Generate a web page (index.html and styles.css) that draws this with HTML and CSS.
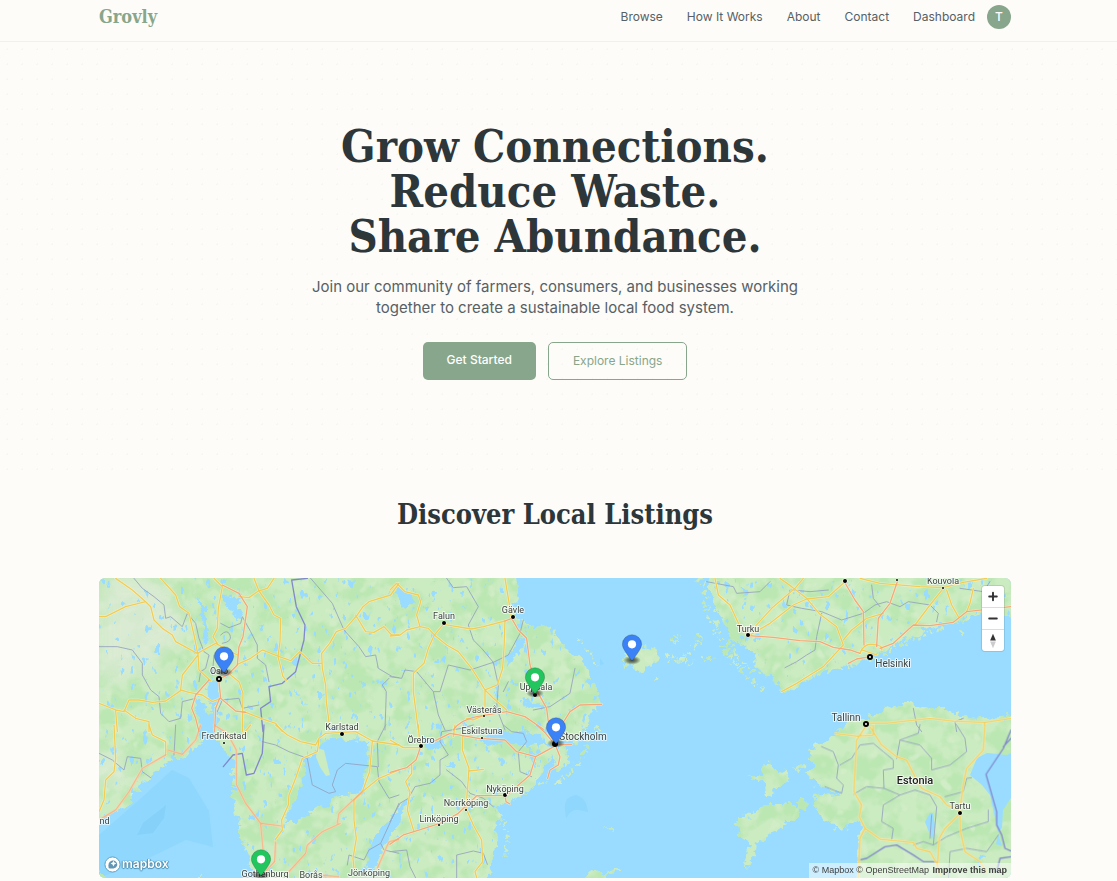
FILE: index.html
```html
<!DOCTYPE html>
<html lang="en">
<head>
<meta charset="utf-8">
<meta name="viewport" content="width=device-width, initial-scale=1">
<title>Grovly</title>
<link rel="stylesheet" href="styles.css">
</head>
<body>
<header class="site-header">
  <div class="container header-row">
    <a class="brand" href="#">Grovly</a>
    <nav class="nav">
      <a href="#">Browse</a>
      <a href="#">How It Works</a>
      <a href="#">About</a>
      <a href="#">Contact</a>
      <a href="#">Dashboard</a>
    </nav>
    <button class="avatar" type="button" aria-label="Account">T</button>
  </div>
</header>
<main>
  <section class="hero">
    <div class="container hero-inner">
      <h1>Grow Connections.<br>Reduce Waste.<br>Share Abundance.</h1>
      <p>Join our community of farmers, consumers, and businesses working together to create a sustainable local food system.</p>
      <div class="actions">
        <a class="btn btn-primary" href="#">Get Started</a>
        <a class="btn btn-outline" href="#">Explore Listings</a>
      </div>
    </div>
  </section>
  <section class="discover">
    <div class="container">
      <h2>Discover Local Listings</h2>
      <div class="map">
        <svg class="map-canvas" viewBox="0 0 912 300" preserveAspectRatio="xMidYMid slice" role="img" aria-label="Map of listings">
          <defs>
            <filter id="terrain" x="0" y="0" width="912" height="300" filterUnits="userSpaceOnUse" color-interpolation-filters="sRGB">
              <feTurbulence type="fractalNoise" baseFrequency=".13" numOctaves="3" seed="4" result="rough"/>
              <feDisplacementMap in="SourceGraphic" in2="rough" scale="12" xChannelSelector="R" yChannelSelector="G" result="land"/>
              <feTurbulence type="fractalNoise" baseFrequency=".045" numOctaves="3" seed="11"/>
              <feColorMatrix values="0 0 0 0 .735  0 0 0 0 .905  0 0 0 0 .7  6 0 0 0 -2.7" result="woods"/>
              <feTurbulence type="fractalNoise" baseFrequency=".07" numOctaves="2" seed="21"/>
              <feColorMatrix values="0 0 0 0 .82  0 0 0 0 .93  0 0 0 0 .78  0 6 0 0 -3.7" result="fields"/>
              <feMerge result="cover"><feMergeNode in="woods"/><feMergeNode in="fields"/></feMerge>
              <feComposite in="cover" in2="land" operator="in" result="cover2"/>
              <feMerge><feMergeNode in="land"/><feMergeNode in="cover2"/></feMerge>
            </filter>
            <filter id="ponds" x="0" y="0" width="912" height="300" filterUnits="userSpaceOnUse" color-interpolation-filters="sRGB">
              <feTurbulence type="fractalNoise" baseFrequency=".16 .09" numOctaves="3" seed="8"/>
              <feColorMatrix values="0 0 0 0 .6  0 0 0 0 .863  0 0 0 0 1  18 0 0 0 -12.3" result="water"/>
              <feComposite in="water" in2="SourceGraphic" operator="in"/>
            </filter>
            <filter id="shore" x="-10%" y="-10%" width="120%" height="120%">
              <feTurbulence type="fractalNoise" baseFrequency=".15" numOctaves="3" seed="6"/>
              <feDisplacementMap in="SourceGraphic" scale="10" xChannelSelector="R" yChannelSelector="G"/>
            </filter>
            <filter id="soft" x="-50%" y="-50%" width="200%" height="200%"><feGaussianBlur stdDeviation="9"/></filter>
            <radialGradient id="shadow"><stop offset=".1" stop-opacity=".65"/><stop offset=".55" stop-opacity=".4"/><stop offset="1" stop-opacity="0"/></radialGradient>
            <path id="west" d="M-9-9H416L419 14 416 24 414 39 424 42 434 49 451 47 458 60 473 75 488 89 491 100 499 112 503 127 491 134 488 144 482 158 478 172 466 174 473 184 458 194 453 176 448 186 441 197 434 209 424 219 408 225 394 229 404 240 394 250 399 267 394 280 391 294 390 309H158L153 287 147 274 143 260 140 240 135 227 137 210 135 197 137 184 127 179 122 166 115 156 115 138 120 122 117 101 112 100 109 112 113 126 111 138 105 133 96 120 97 134 103 148 103 163 90 177 73 179 63 189 50 199 37 212 30 225 17 234-9 248Z"/>
            <path id="finland" d="M608-9L611 17 618 34 628 47 631 60 644 67 658 74 654 87 671 99 684 114 701 107 718 97 731 92 748 87 768 79 784 72 801 64 818 57 841 47 861 44 881 35 922 40V-9Z"/>
            <path id="estonia" d="M744 150L751 144 768 139 788 130 808 125 831 130 848 130 861 139 884 140 905 139 922 134V309H758L760 280 759 260 764 250 761 244 751 244 743 254 724 240 718 230 714 217 741 215 728 210 716 207 709 194 716 189 711 180 713 169 728 164 738 154Z"/>
            <g id="main-roads">
              <g transform="translate(0 -3) scale(.3333)">
                <path d="M370 30L420 55 445 95 440 130 432 185 420 215 415 270 385 300 365 310M330 315L290 360 278 400 290 430 300 470M360 320L365 370 410 408 440 412M362 370L350 400 347 470"/>
              </g>
              <g transform="translate(0 147) scale(.3333)">
                <path d="M345 0L385 25 412 75 413 180 440 235 485 295 492 370 490 450M305 0L290 45 250 88 205 75M200 90L130 130 90 200 50 255 0 285M485 295L545 303M530 350L527 410 490 450M565 445L620 385 625 360 670 320 725 295M715 295L720 265 790 200M670 451L720 455M835 430L870 350 900 343"/>
              </g>
              <g transform="translate(291 -3) scale(.3333)">
                <path d="M365 130L385 165 410 190 420 270 430 300 445 355 470 400 475 440M345 138L365 130M190 465Q210 435 260 425L350 410 405 425 460 463M515 450L540 410 570 390 635 388"/>
              </g>
              <g transform="translate(291 147) scale(.3333)">
                <path d="M0 358L40 330 150 295 205 265 260 212 350 211 420 150 437 95 497 62M130 50L180 25 265 40 345 45 380 80 437 95M497 62L510 95 505 120 480 135 473 160M93 62L78 105 50 128 0 142M345 211L348 230 360 237M440 0L467 25 497 62M500 60L545 58"/>
              </g>
              <g transform="translate(601 -3) scale(.3333)">
                <path d="M145 182L220 187 300 197 360 200 400 217 450 225 480 235M430 15L465 75 490 110 492 210M592 20L570 85 535 130 530 215M540 220L580 205 640 150 690 152 760 142 800 110 933 95M510 245L470 252 445 265"/>
              </g>
            </g>
            <g id="roads">
              <g transform="translate(0 -3) scale(.3333)">
                <path d="M50 10L100 45 140 80 80 95 20 125 0 125M140 80L155 95 165 135 190 160 220 180 230 200 295 235M185 10L230 60 242 95 270 115 285 180 297 240 250 300 245 345 270 352 310 360 340 380 365 370M295 235L350 205 415 240M345 10L370 35 358 100 355 160 342 185 355 205M525 10L505 40 478 48 450 68 420 65M465 10L480 48 510 90 525 120 545 130 543 200 537 245 552 305 562 317M415 268L455 250 490 225 535 243 575 257 602 230 640 265 668 265M900 25L875 60 810 80 792 95 775 120 740 160 712 170 692 205 668 235 670 280 680 330 682 380 690 440M770 120L800 170 825 172 855 155 878 180 900 180M0 385L50 405 75 410 90 375 120 375 160 382 200 378 245 347M75 405L110 430 150 440 150 470M50 408L55 470M297 235L300 285 335 318M395 300L420 320 432 355 430 470M435 410L490 432 530 445 550 470"/>
              </g>
              <g transform="translate(0 147) scale(.3333)">
                <path d="M530 0L565 30 605 50 650 60 660 40 680 25 770 20 820 48 900 60M660 45L655 80 610 100 590 160 570 210 568 240 548 285 550 315 528 345M820 48L812 140 790 200 765 225 765 285 772 340 762 400 765 430M790 200L840 160 900 135M150 0L160 30 200 50 200 90M45 0L50 100 45 140 20 165 15 225 0 260M455 0L430 30"/>
              </g>
              <g transform="translate(291 -3) scale(.3333)">
                <path d="M0 45L20 25 45 50 85 60 92 80 80 120 90 155 50 165 30 180 0 183M90 155L115 160 133 180 160 148 245 162 280 155 345 138M345 10L355 70 365 130M133 180L115 220 102 265 70 295 70 350 85 465M133 180L170 210 205 230 245 280 270 320 285 345 285 420M345 138L342 220 338 280 322 330 285 345 310 370 350 405M285 420L250 435 230 430"/>
              </g>
              <g transform="translate(291 147) scale(.3333)">
                <path d="M85 0L88 40 93 62M0 45L40 68 93 68M195 0L190 35M220 0L217 75 237 130 235 160 228 250 250 300 275 345 278 410 255 440 262 465M237 138L280 133M65 120L65 145 47 170 60 200 52 255 72 320"/>
              </g>
              <g transform="translate(601 -3) scale(.3333)">
                <path d="M45 10L55 60 90 90 120 155 145 182M310 10L285 40 215 100 165 155M240 10L275 35 320 70 360 118 410 155 430 210M150 180L210 145 280 90 320 72 385 65 430 25M430 210L370 275 330 300 290 325 245 350M480 10L540 25 660 35 730 38 790 22 860 10M730 40L690 90 645 150M740 45L755 90 775 125M820 40L810 85 800 110M430 195L455 165 500 130 550 115M480 235Q490 205 520 208T545 225M485 225L530 240"/>
              </g>
              <g transform="translate(601 147) scale(.3333)">
                <path d="M500 0L470 45 462 200 485 240 478 275 495 310 540 342 640 352 650 370 690 380 710 415 720 450M495 310L480 340 475 465M510 5L545 60 590 95 620 105 645 155 665 190 720 215 740 240 780 255 790 180 800 130 850 75 855 0M780 265L735 310 718 340 712 430M780 265L782 320 795 380 840 410 860 440M405 25L470 33 520 30 520 0M497 -6L560-6 690-20 760-12 855-8 933-20M855-8L853 0"/>
              </g>
            </g>
            <symbol id="pin" viewBox="0 0 27 41" overflow="visible">
              <ellipse cx="13.5" cy="35" rx="12" ry="6" fill="url(#shadow)"/>
              <path fill="currentColor" stroke="#000" stroke-opacity=".25" d="M26.5 13.5c0 5.57-6.5 13.5-11.75 21-.73 1-1.77 1-2.5 0C7 27 .5 19.22.5 13.5a13 13 0 0 1 26 0Z"/>
              <circle cx="13.5" cy="13.5" r="5.5" fill="#fff"/>
            </symbol>
          </defs>

          <rect class="sea" width="912" height="300"/>
          <path class="deep" d="M73 192L90 200 110 233 114 269 87 262 52 279 0 300V257L40 222ZM466 232Q464 219 477 217 488 220 489 234L480 232Q473 230 467 240ZM501 80l4 6-4 1z"/>
          <path class="deeper" d="M67 227L65 240 54 255 38 257 44 245Z"/>

          <g class="land" filter="url(#terrain)">
            <use href="#west"/><use href="#finland"/><use href="#estonia"/>
            <path d="M669 184l5 6 10 4 6 8-11 7-6 10-7-2-2-10-5-6-14-3 16-1 3-8zM695 187l11 3-7 3zM669 225L688 225 698 230 703 237 694 240 681 250 668 259 656 265 654 280 648 290 645 285 653 267 639 257 643 252 636 247 641 237 651 239 659 230ZM694 222l13 2 1 6-8 1zM524 77l8 1 4-6 7-5 13 5 2 10-10 10-10 2-7-10-5 5zM556 96l3 5-3 2zM483 304l8-12 13 3 14-6 5 2-15 6-4 8zM508 249l7 2-1 4zM0 293l9 11H-5zM88 304l17-8-5 8z"/>
            <path class="isles" d="M566 75l12 6 14-6M568 84l14-2 12 4M575 66l5-10M594 70l10-16M604 82l12-4M600 0l5 10 2 22 10 28 14 20 12 14 20 18M615 42l14 30 20 18M629 62l15 24 18 12M480 60l12 16 6 12M476 88l14 8M740 90l40-13 32-14 30-12M458 205l18-15 12-24 10-16M440 206l10-5M133 190l3 30 6 28M405 244l3 18-2 16M862 52l2 6M898 63l1 3"/>
          </g>
          <g class="haze" filter="url(#soft)"><path d="M0 0H60L90 50 50 90 0 110Z"/><path d="M0 170L40 190 0 220Z"/></g>
          <g filter="url(#ponds)"><use href="#west"/><use href="#finland"/></g>
          <g class="lake" filter="url(#shore)">
            <path d="M203 180L213 179 227 160 247 162 267 164 270 180 265 197 263 214 247 217 233 220 230 227 217 229 200 244 185 244 193 227 203 204 208 190ZM310 220L291 240 273 264 267 284 270 294 277 294 283 270 300 247 303 230 315 219ZM122 17l15 4 6 14-4 8-8-14-9-5zM98 18l9 14 3 34-4 2-3-30zM96 120l6 2 4 14-8 2zM103 134l16 4-3 24-16 0zM110 102l6 0 4 14-10 8zM296 10l14 4 8 10-14 6zM376 158l12 2 14-8 12 4 12-4 16 6 10 10-14-2-16 2-20-4-14 4zM405 80l10-9 6-13 5 2-6 16-9 9zM425 120l10 6 14-2-2 5-14 2-10-5zM322 160l18 2 8 6-20 2zM345 188l10-4 2 4zM455 160l16 4 14 6-14 4-10-8zM428 166l10 16 2 8-12-12zM640 5l10 8-4 4zM878 290l4-14 4 1z"/>
          </g>
          <path class="lake" d="M871 197L878 180 888 175 908 177 912 175V220L904 232 903 250 899 254 896 240 891 217 883 207ZM831 235L826 244 833 262 836 247 834 235ZM899 256l4 12-6-2z"/>
          <path class="land" d="M218 170l7 2 6 25-4 1-6-9-4-10z"/>

          <g class="region">
            <g transform="translate(0 -3) scale(.3333)"><path d="M105 10L130 40 165 65 195 90 200 130 215 125 250 155 265 115 290 145 300 190 315 230 330 240 320 280 305 290 300 320M365 145L390 158 425 145 430 125 455 170 475 210 475 250 500 270 510 320M0 215L55 215 100 225 130 265 130 300 155 345 180 365 185 415 210 440 245 430 250 380 290 370M365 180Q385 160 393 180T370 205M635 10L700 85 735 165 780 215 800 245 830 240 838 280 880 305 900 308M870 310L850 330 862 350 858 465M345 240L340 300M355 410L370 375 420 370 430 400 480 390"/></g>
            <g transform="translate(0 147) scale(.3333)"><path d="M0 85L40 105 75 135 85 95 125 100 130 140 155 158M230 0L225 90M490 50L530 60 570 80 625 100 640 180 690 205 710 200 700 180 715 135 740 115 835 125 840 170 870 220 900 210M900 235L845 355 810 375 795 405 750 390 745 420M845 355L855 375 900 385M860 0L835 50 838 125"/></g>
            <g transform="translate(291 -3) scale(.3333)"><path d="M170 10L190 38 230 35 265 95 235 150 250 195 275 220 310 262 355 240 390 175 400 135M0 305L35 310 45 285 80 290 130 350 150 350 175 270 240 285 310 262M310 262L325 330 320 400 345 465M130 350L145 420 165 465M430 405L480 395 540 355 555 280M355 320L340 350"/></g>
            <g transform="translate(291 147) scale(.3333)"><path d="M0 290L30 235 55 220 75 185 120 175 150 150 150 105 175 90 150 50 155 20 215 10 250 0M170 135L215 170 240 205 280 220 310 245M0 380L50 375 60 425 80 465M200 465V390L250 378 280 385 292 418M340 0L365 20 400 25 410 50 385 80 390 140 425 155"/></g>
            <g transform="translate(601 -3) scale(.3333)"><path d="M20 20L100 35 110 55 180 50 210 20M270 45L260 90 305 100 365 110 425 135 490 115 525 90 560 80 600 95 625 80 690 90 715 115 710 140M275 45L330 50 385 45M365 115L350 185 345 225 320 240 290 260 255 278M515 30L520 70 540 95M780 40L850 50 870 20M640 400L650 450 665 470M770 470L765 440 790 430"/></g>
            <g transform="translate(601 147) scale(.3333)"><path d="M365 65L400 80 415 120 410 160 430 180 425 205 375 185M420 120L455 100 480 60 520 55 550 80 580 105 580 130 550 135 552 190 500 185 462 207M552 190L600 210 645 195 690 210 710 245 700 360 670 350 640 360M600 210L550 240 545 290 580 310 575 345M590 100L600 45 655 25 660 0M600 45L660 60 695 100 695 135 750 120 800 80 795 40 770 0M735 215L790 200 800 160 815 158M700 360L740 335 800 310 865 290 865 255M745 470L750 380 800 370 860 380 895 330M695 270L690 340"/></g>
          </g>
          <g class="frontier">
            <g transform="translate(0 -3) scale(.3333)"><path d="M625 10L578 15 592 95 618 150 615 195 590 290 550 325 510 335 515 380 485 400 492 470"/></g>
            <g transform="translate(0 147) scale(.3333)"><path d="M495 0L490 85 465 145 442 150 430 85 402 90 373 125"/></g>
            <g transform="translate(601 147) scale(.3333)"><path d="M933 15L910 70 858 148 890 260 890 300 905 330 915 370 933 378M478 405L500 400 555 365 590 360 640 390 670 410 710 410 M933 395L900 400 890 440M933 40L910 65"/></g>
          </g>

          <g class="casing"><use href="#roads"/><use href="#main-roads"/></g>
          <use class="road-minor" href="#roads"/>
          <use class="road-major" href="#main-roads"/>

          <g class="towns">
            <circle cx="345" cy="45" r="2"/><circle cx="414" cy="39" r="2"/><circle cx="436" cy="117" r="2"/><circle cx="385" cy="138" r="1"/><circle cx="383" cy="160" r="1"/><circle cx="322" cy="168" r="2"/><circle cx="243" cy="156" r="2"/><circle cx="125" cy="165" r="1"/><circle cx="406" cy="217" r="2"/><circle cx="367" cy="232" r="1"/><circle cx="340" cy="247" r="1"/><circle cx="649" cy="57" r="2"/><circle cx="746" cy="3" r="2"/><circle cx="798" cy="2" r="1"/><circle cx="844" cy="10" r="1"/><circle cx="861" cy="235" r="2"/><circle cx="456" cy="166" r="3"/>
          </g>
          <g class="capitals"><circle cx="120" cy="101" r="2"/><circle cx="771" cy="79" r="2"/><circle cx="767" cy="146" r="2"/></g>
          <g class="places">
            <text x="345" y="41">Falun</text><text x="414" y="35">Gävle</text><text x="120" y="96">Oslo</text><text x="437" y="112">Uppsala</text><text x="385" y="135">Västerås</text><text x="383" y="156">Eskilstuna</text><text x="322" y="165">Örebro</text><text x="243" y="152">Karlstad</text><text x="125" y="161">Fredrikstad</text><text x="406" y="214">Nyköping</text><text x="367" y="228">Norrköping</text><text x="340" y="244">Linköping</text><text x="166" y="299">Gothenburg</text><text x="212" y="300">Borås</text><text x="270" y="298">Jönköping</text><text x="649" y="54">Turku</text><text x="844" y="6">Kouvola</text><text x="861" y="231">Tartu</text><text x="3" y="246">and</text>
            <text class="city" x="484" y="162">Stockholm</text><text class="city" x="794" y="89">Helsinki</text><text class="city" x="747" y="143">Tallinn</text><text class="country" x="816" y="206">Estonia</text>
          </g>

          <g class="listing-business">
            <use href="#pin" x="115" y="68" width="20" height="31"/><use href="#pin" x="523" y="56" width="20" height="31"/><use href="#pin" x="447" y="139" width="20" height="31"/>
          </g>
          <g class="listing-farm">
            <use href="#pin" x="426" y="89" width="20" height="31"/><use href="#pin" x="152" y="271" width="20" height="31"/>
          </g>
        </svg>
        <div class="map-controls">
          <button type="button" aria-label="Zoom in"><svg viewBox="0 0 22 22"><path d="M11 7v8M7 11h8"/></svg></button>
          <button type="button" aria-label="Zoom out"><svg viewBox="0 0 22 22"><path d="M7 11h8"/></svg></button>
          <button type="button" aria-label="Reset bearing to north"><svg class="compass" viewBox="0 0 22 22"><path d="M8 11l3-7 3 7z"/><path class="south" d="M8 12l3 7 3-7z"/></svg></button>
        </div>
        <a class="map-logo" href="#" aria-label="Mapbox logo">
          <svg viewBox="0 0 18 18"><circle cx="9" cy="9" r="8"/><circle class="ring" cx="9" cy="9" r="6"/><path d="M5 13c-1-4 0-7 3-8 3-1 6 1 6 4 0 4-5 5-9 4z"/><path class="star" d="M10 5l1 2 2 1-2 1-1 2-1-2-2-1 2-1z"/></svg>
          <span>mapbox</span>
        </a>
        <div class="map-credit"><a href="#">© Mapbox</a> <a href="#">© OpenStreetMap</a> <a class="improve" href="#">Improve this map</a></div>
      </div>
    </div>
  </section>
</main>
</body>
</html>
```
FILE: styles.css
```css
* { box-sizing: border-box; }

body {
  margin: 0;
  background: #fdfcf9;
  color: #2d3639;
  font-family: Inter, "Liberation Sans", sans-serif;
  font-size: 12px;
}

a { color: inherit; text-decoration: none; }

.site-header, .hero, .discover { padding-right: 7px; }

.container {
  width: 100%;
  max-width: 960px;
  margin: 0 auto;
  padding: 0 24px;
}

.site-header {
  padding-top: 5px;
  padding-bottom: 12px;
  border-bottom: 1px solid #f0f0ec;
}

.header-row { display: flex; align-items: center; }

.brand, h1, h2 {
  margin: 0;
  font-family: "DejaVu Serif Condensed", "DejaVu Serif", serif;
  font-weight: bold;
}

.brand {
  margin-right: auto;
  color: #87a68b;
  font-size: 18px;
  line-height: 24px;
}

.nav {
  display: flex;
  gap: 24px;
  margin-right: 12px;
  color: #576064;
  line-height: 18px;
}

.avatar {
  width: 24px;
  height: 24px;
  padding: 0;
  border: 0;
  border-radius: 50%;
  background: #87a68b;
  color: #fff;
  font: 500 12px/24px Inter, sans-serif;
}

.hero {
  padding-top: 82px;
  padding-bottom: 96px;
  background-image:
    radial-gradient(circle at 50% 50%, rgba(135, 166, 139, .06) 1px, transparent 1px),
    radial-gradient(circle at 0 0, rgba(135, 166, 139, .02) 1px, transparent 1px);
  background-size: 15px 15px;
}

.hero-inner {
  display: flex;
  flex-direction: column;
  align-items: center;
  text-align: center;
}

h1 { font-size: 45px; line-height: 45px; }

.hero p {
  max-width: 504px;
  margin: 17px 0 24px;
  color: #576064;
  font-size: 15px;
  line-height: 21px;
}

.actions { display: flex; gap: 12px; }

.btn {
  padding: 9px 24px 11px;
  border-radius: 5px;
  font-weight: 500;
  line-height: 18px;
}

.btn-primary { background: #87a68b; color: #fff; }

.btn-outline {
  padding: 9px 24px;
  border: 1px solid #87a68b;
  color: #87a68b;
  font-weight: 400;
}

.discover { padding-top: 21px; padding-bottom: 48px; }

h2 {
  margin-bottom: 45px;
  font-size: 27px;
  line-height: 36px;
  text-align: center;
}

.map {
  position: relative;
  height: 300px;
  overflow: hidden;
  border-radius: 6px;
}

.map-canvas { display: block; width: 100%; height: 100%; }

.sea { fill: #99dcff; }
.deep { fill: #8fd7fd; }
.deeper { fill: #86d1fa; }
.land { fill: #cbebc1; }
.isles { fill: none; stroke: #cbebc1; stroke-width: 3; stroke-dasharray: 4 3 2 4; }
.haze { fill: #e4ebdf; opacity: .6; }
.lake { fill: #99dcff; }
.region, .frontier, .casing, .road-minor, .road-major { fill: none; stroke-linejoin: round; stroke-linecap: round; }
.region { stroke: #94a2bf; stroke-width: 3; opacity: .85; }
.frontier { stroke: #8289cb; stroke-width: 4; }
.casing { stroke: #fdf5d5; stroke-width: 7; opacity: .7; }
.road-minor { stroke: #f2cd55; stroke-width: 4; }
.road-major { stroke: #f5a878; stroke-width: 4; }
.towns { fill: #000; stroke: #fff; stroke-width: 1; paint-order: stroke; }
.capitals { fill: #fff; stroke: #000; stroke-width: 2; }

.places {
  fill: #3d4340;
  stroke: rgba(255, 255, 255, .7);
  stroke-width: 2;
  stroke-linejoin: round;
  paint-order: stroke;
  font: 9px Roboto, sans-serif;
  text-anchor: middle;
}
.city { font-size: 10px; }
.country { fill: #222; font-size: 11px; font-weight: 500; }

.listing-business { color: #3b82f6; }
.listing-farm { color: #22c55e; }

.map-controls {
  position: absolute;
  top: 8px;
  right: 7px;
  width: 22px;
  overflow: hidden;
  border-radius: 3px;
  background: #fff;
  box-shadow: 0 0 0 1px rgba(0, 0, 0, .1);
}

.map-controls button {
  display: block;
  width: 100%;
  padding: 0;
  border: 0;
  background: none;
}
.map-controls button + button { border-top: 1px solid #ddd; }
.map-controls svg { display: block; width: 22px; height: 21px; stroke: #333; stroke-width: 2; stroke-linecap: round; }
.map-controls .compass { fill: #333; stroke: none; }
.compass .south { fill: #ccc; }

.map-logo {
  position: absolute;
  left: 5px;
  bottom: 5px;
  display: flex;
  align-items: center;
  gap: 1px;
  color: #fff;
  font: 600 12px/18px Inter, sans-serif;
  text-shadow: 0 0 1px #4e8eb1, 1px 0 1px #4e8eb1, -1px 0 1px #4e8eb1, 0 1px 1px #4e8eb1;
}
.map-logo svg { width: 17px; height: 17px; fill: #fff; stroke: #5f9dbd; stroke-width: 1; }
.map-logo path { fill: #6097b6; stroke: none; }
.map-logo .ring { stroke: none; }
.map-logo .star { fill: #fff; }

.map-credit {
  position: absolute;
  right: 0;
  bottom: 0;
  padding: 0 4px;
  background: rgba(255, 255, 255, .5);
  color: #404040;
  font: 9px/15px "Liberation Sans", sans-serif;
}
.improve { margin-left: 1px; font-weight: bold; }
```
